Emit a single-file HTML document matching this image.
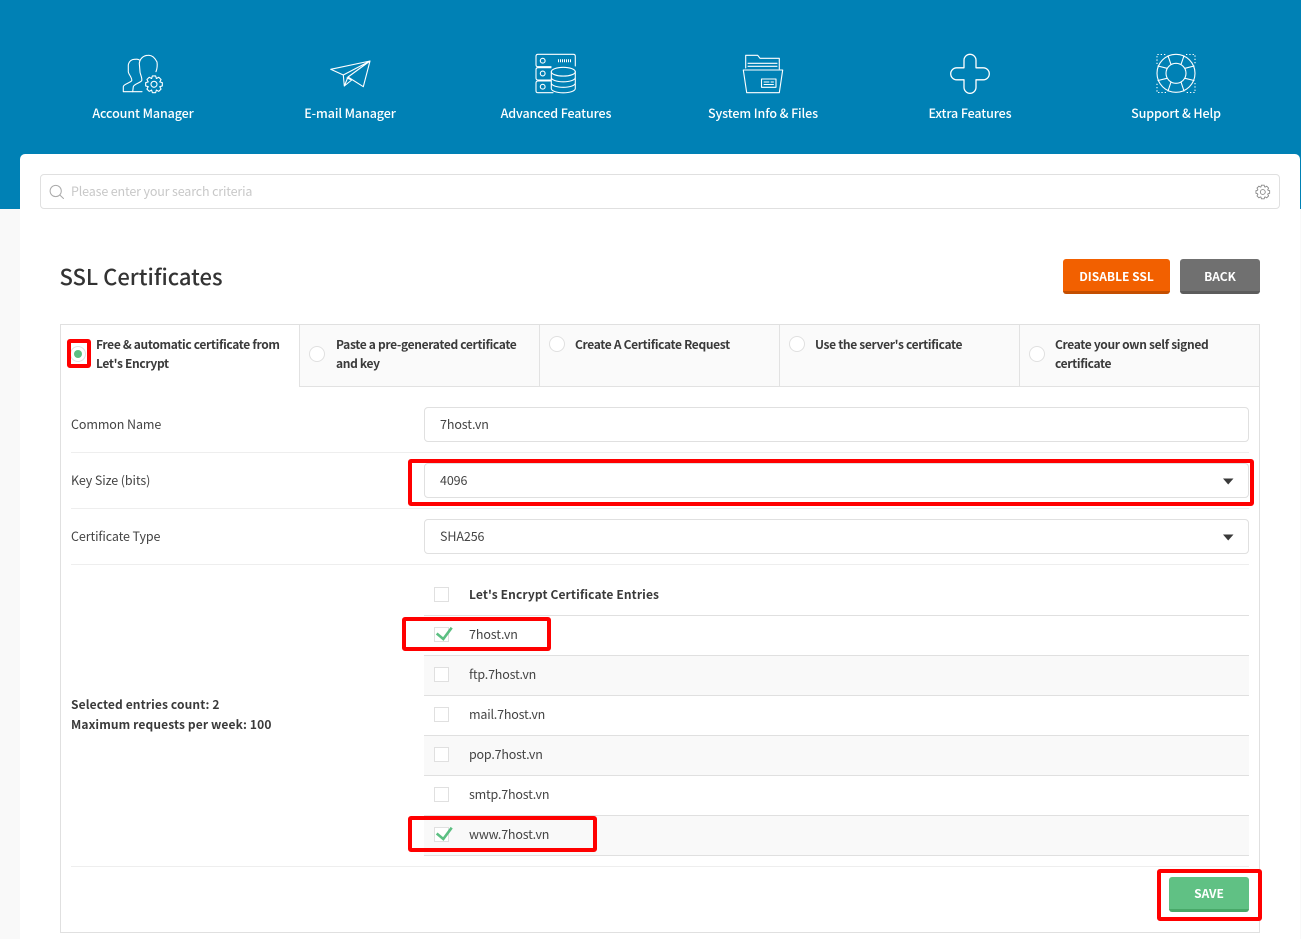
<!DOCTYPE html>
<html lang="en"><head><meta charset="utf-8"><title>SSL Certificates</title>
<style>
html,body{margin:0;padding:0}
body{width:1301px;height:939px;overflow:hidden;position:relative;background:#f9f9f9;font-family:"Noto Sans CJK SC","Liberation Sans",sans-serif;font-size:12.5px;color:#444}
.a{position:absolute;box-sizing:border-box}
.t{position:absolute;white-space:nowrap;line-height:20px;height:20px;letter-spacing:-.1px;margin-top:-1px}
.r{letter-spacing:-.2px}
.b{font-weight:700;color:#3a3a3a;font-size:12px;letter-spacing:.12px;margin-top:0}
.tb{font-weight:700;color:#3a3a3a;font-size:12px;letter-spacing:-.33px;margin-top:0}
.nav{color:#fff;font-size:12.5px;text-align:center;width:200px;font-weight:500;letter-spacing:-.1px;top:104px}
.inp{position:absolute;box-sizing:border-box;left:424px;width:825px;height:35px;background:#fff;border:1px solid #e0e0e0;border-radius:4px}
.sep{position:absolute;left:71px;width:1178px;height:1px;background:#eee}
.row{position:absolute;left:424px;width:825px;height:40px;box-sizing:border-box;border-bottom:1px solid #e0e0e0}
.cb{position:absolute;left:434px;width:15px;height:15px;box-sizing:border-box;border:1px solid #e0e0e0;background:#fff}
.red{position:absolute;box-sizing:border-box;border:4px solid #f00;border-radius:3px}
.tab{position:absolute;top:325px;height:62px;box-sizing:border-box;background:#fafafa;border-left:1px solid #e2e2e2;border-bottom:1px solid #e2e2e2}
.rad{position:absolute;width:16px;height:16px;box-sizing:border-box;border:1px solid #e0e0e0;border-radius:50%;background:#fff}
.btn{position:absolute;box-sizing:border-box;border-radius:3px;color:#fff;font-weight:700;font-size:12px;text-align:center;height:35px;line-height:35px}
</style></head><body>
<div class="a" style="left:0;top:0;width:1301px;height:209px;background:#0081b5"></div>
<div class="a" style="left:20px;top:154px;width:1280px;height:785px;background:#fff;border-radius:5px 5px 0 0"></div>

<div class="t nav" style="left:43px">Account Manager</div>
<div class="t nav" style="left:250px">E-mail Manager</div>
<div class="t nav" style="left:456px">Advanced Features</div>
<div class="t nav" style="left:663px">System Info &amp; Files</div>
<div class="t nav" style="left:870px">Extra Features</div>
<div class="t nav" style="left:1076px">Support &amp; Help</div>

<div class="a" style="left:40px;top:174px;width:1240px;height:35px;border:1px solid #e0e0e0;border-radius:4px;background:#fff"></div>
<div class="t" style="left:71px;top:182px;color:#c8c8c8;letter-spacing:-.15px">Please enter your search criteria</div>

<div class="t" style="left:59.5px;top:262px;height:30px;line-height:30px;font-size:22px;font-weight:500;color:#333;letter-spacing:0">SSL Certificates</div>
<div class="btn" style="left:1063px;top:259px;width:107px;background:#f26000;border-bottom:3px solid #c44e00">DISABLE SSL</div>
<div class="btn" style="left:1180px;top:259px;width:80px;background:#707070;border-bottom:3px solid #5c5c5c">BACK</div>

<div class="a" style="left:60px;top:324px;width:1200px;height:609px;border:1px solid #e0e0e0;background:#fff"></div>
<div class="tab" style="left:299px;width:240px"></div>
<div class="tab" style="left:539px;width:240px"></div>
<div class="tab" style="left:779px;width:240px"></div>
<div class="tab" style="left:1019px;width:240px"></div>

<div class="rad" style="left:70px;top:346px"></div>
<div class="a" style="left:74px;top:350px;width:8px;height:8px;border-radius:50%;background:#5cbf82"></div>
<div class="rad" style="left:309px;top:346px"></div>
<div class="rad" style="left:549px;top:336px"></div>
<div class="rad" style="left:789px;top:336px"></div>
<div class="rad" style="left:1029px;top:346px"></div>

<div class="t tb" style="left:96px;top:335px">Free &amp; automatic certificate from</div>
<div class="t tb" style="left:96px;top:354px">Let's Encrypt</div>
<div class="t tb" style="left:336px;top:335px">Paste a pre-generated certificate</div>
<div class="t tb" style="left:336px;top:354px">and key</div>
<div class="t tb" style="left:575px;top:335px">Create A Certificate Request</div>
<div class="t tb" style="left:815px;top:335px">Use the server's certificate</div>
<div class="t tb" style="left:1055px;top:335px">Create your own self signed</div>
<div class="t tb" style="left:1055px;top:354px">certificate</div>

<div class="t" style="left:71px;top:415px">Common Name</div>
<div class="inp" style="top:407px"></div>
<div class="t" style="left:440px;top:415px">7host.vn</div>
<div class="sep" style="top:452px"></div>
<div class="t" style="left:71px;top:471px">Key Size (bits)</div>
<div class="inp" style="top:463px"></div>
<div class="t" style="left:440px;top:471px">4096</div>
<div class="sep" style="top:508px"></div>
<div class="t" style="left:71px;top:527px">Certificate Type</div>
<div class="inp" style="top:519px"></div>
<div class="t" style="left:440px;top:527px">SHA256</div>
<div class="sep" style="top:564px"></div>

<div class="row" style="top:576px"></div>
<div class="row" style="top:616px"></div>
<div class="row" style="top:656px;background:#f9f9f9"></div>
<div class="row" style="top:696px"></div>
<div class="row" style="top:736px;background:#f9f9f9"></div>
<div class="row" style="top:776px"></div>
<div class="row" style="top:816px;background:#f9f9f9"></div>

<div class="cb" style="top:587px"></div>
<div class="cb" style="top:627px"></div>
<div class="cb" style="top:667px"></div>
<div class="cb" style="top:707px"></div>
<div class="cb" style="top:747px"></div>
<div class="cb" style="top:787px"></div>
<div class="cb" style="top:827px"></div>

<div class="t b" style="left:469px;top:585px">Let's Encrypt Certificate Entries</div>
<div class="t" style="left:469px;top:625px">7host.vn</div>
<div class="t r" style="left:469px;top:665px">ftp.7host.vn</div>
<div class="t r" style="left:469px;top:705px">mail.7host.vn</div>
<div class="t r" style="left:469px;top:745px">pop.7host.vn</div>
<div class="t r" style="left:469px;top:785px">smtp.7host.vn</div>
<div class="t r" style="left:469px;top:825px">www.7host.vn</div>

<div class="t b" style="left:71px;top:695px">Selected entries count: 2</div>
<div class="t b" style="left:71px;top:715px">Maximum requests per week: 100</div>

<div class="sep" style="top:866px"></div>
<div class="btn" style="left:1169px;top:877px;width:80px;background:#60c184;border-bottom:3px solid #48a868;line-height:33px">SAVE</div>

<svg class="a" style="left:0;top:0" width="1301" height="939" viewBox="0 0 1301 939" fill="none">
<defs>
<g id="gear">
<path id="th" d="M5.82,-2.41L8.34,-1.62V1.62L5.82,2.41"/>
<use href="#th" transform="rotate(45)"/><use href="#th" transform="rotate(90)"/><use href="#th" transform="rotate(135)"/><use href="#th" transform="rotate(180)"/><use href="#th" transform="rotate(225)"/><use href="#th" transform="rotate(270)"/><use href="#th" transform="rotate(315)"/>
<circle r="3"/>
</g>
</defs>
<g stroke="#fff" stroke-width="1.1" stroke-linejoin="round" stroke-linecap="round">
<!-- account -->
<path d="M142,91.7H123.3V86.7C123.5,84 130,83 131.7,80.7C132.5,78 128.3,74 128.3,71.7V65C129,61 132,59 135,59.3C137,59 139,59.5 140,60.5"/>
<path d="M132.7,91.7L133.3,86.7C134,84 140,83 141.7,80.7C142.5,78 140,74 140,71.7L139.3,63.3C140,58 144,55.3 148.3,55.3C152,55 155,58 157,62C157.6,66 157,69 156,71.7"/>
<use href="#gear" transform="translate(154,84.3)"/>
<!-- plane -->
<path d="M370,61L330.7,69.3L343.3,75ZM370,61L348,77L344.3,86L343.3,75M348,77L363.3,86.7L370,61M347,78L351.7,80L344.3,86"/>
<!-- server -->
<path d="M551,66.7H538Q536,66.7 536,64.7V56.3Q536,54.3 538,54.3H573.3Q575.3,54.3 575.3,56.3V66M551,67.7H538Q536,67.7 536,69.7V78Q536,80 538,80H551M551,81H538Q536,81 536,83V90.7Q536,92.7 538,92.7H553"/>
<circle cx="542.7" cy="60.7" r="2.4"/><circle cx="542.7" cy="73.5" r="2.4"/><circle cx="542.7" cy="86.7" r="2.4"/>
<path d="M558,60.7H572" stroke-width="3" stroke-dasharray="1 1" stroke-linecap="butt"/>
<ellipse cx="563.3" cy="71.7" rx="12" ry="4.4"/>
<path d="M551.3,71.7V88.5C551.3,91 557,92.8 563.3,92.8S575.3,91 575.3,88.5V71.7M551.3,77.5C551.3,80 557,81.8 563.3,81.8S575.3,80 575.3,77.5M551.3,83C551.3,85.5 557,87.3 563.3,87.3S575.3,85.5 575.3,83"/>
<!-- folder -->
<path d="M745.7,68V55.3H757.7L760,58.3H779.3V69M748,63.3H777M748,66.3H777"/>
<path d="M743.3,70H782.7L779.3,92.7H746.7Z"/>
<rect x="761.5" y="79" width="14.5" height="8.3"/>
<path d="M764,82H769M771,82H773.5M764,84.5H773.5" stroke-width=".9"/>
<!-- plus -->
<path d="M964,60.3a6,6 0 0 1 12,0V67.8H983.3a6,6 0 0 1 0,12H976V87.3a6,6 0 0 1 -12,0V79.8H956.7a6,6 0 0 1 0,-12H964Z" stroke-width="1.3"/>
<!-- lifebuoy -->
<circle cx="1176" cy="73.3" r="19"/><circle cx="1176" cy="73.3" r="10"/>
<path d="M1171,64.5L1168,55.8M1181,64.5L1184,55.8M1171,82L1168,91M1181,82L1184,91M1167,68.3L1158,66M1167,78.3L1158,80.5M1185,68.3L1194,66M1185,78.3L1194,80.5"/>
<path d="M1157,64V54.5H1166M1186,54.5H1195V64M1195,83V92.5H1186M1166,92.5H1157V83" stroke-dasharray="1.3 2" stroke-linecap="butt"/>
</g>
<!-- search -->
<g stroke="#aaa" stroke-width="1" stroke-linecap="round"><circle cx="55.7" cy="191" r="5.6"/><path d="M59.8,195L63.5,198.5"/></g>
<use href="#gear" transform="translate(1262.8,192) scale(.82)" stroke="#888" stroke-width="1.1"/>
<!-- selects -->
<path d="M1223,478.5H1233.5L1228.2,484.5Z M1223,534.5H1233.5L1228.2,540.5Z" fill="#3a3a3a"/>
<!-- checks -->
<path d="M436.7,633.5L443.3,639L451.7,627.7M436.7,833.5L443.3,839L451.7,827.7" stroke="#5cbf82" stroke-width="2.6"/>
</svg>

<div class="red" style="left:67px;top:339px;width:24px;height:29px"></div>
<div class="red" style="left:408px;top:459px;width:846px;height:47px"></div>
<div class="red" style="left:402px;top:617px;width:149px;height:34px"></div>
<div class="red" style="left:408px;top:816px;width:189px;height:36px"></div>
<div class="red" style="left:1157px;top:869px;width:105px;height:52px"></div>
</body></html>
